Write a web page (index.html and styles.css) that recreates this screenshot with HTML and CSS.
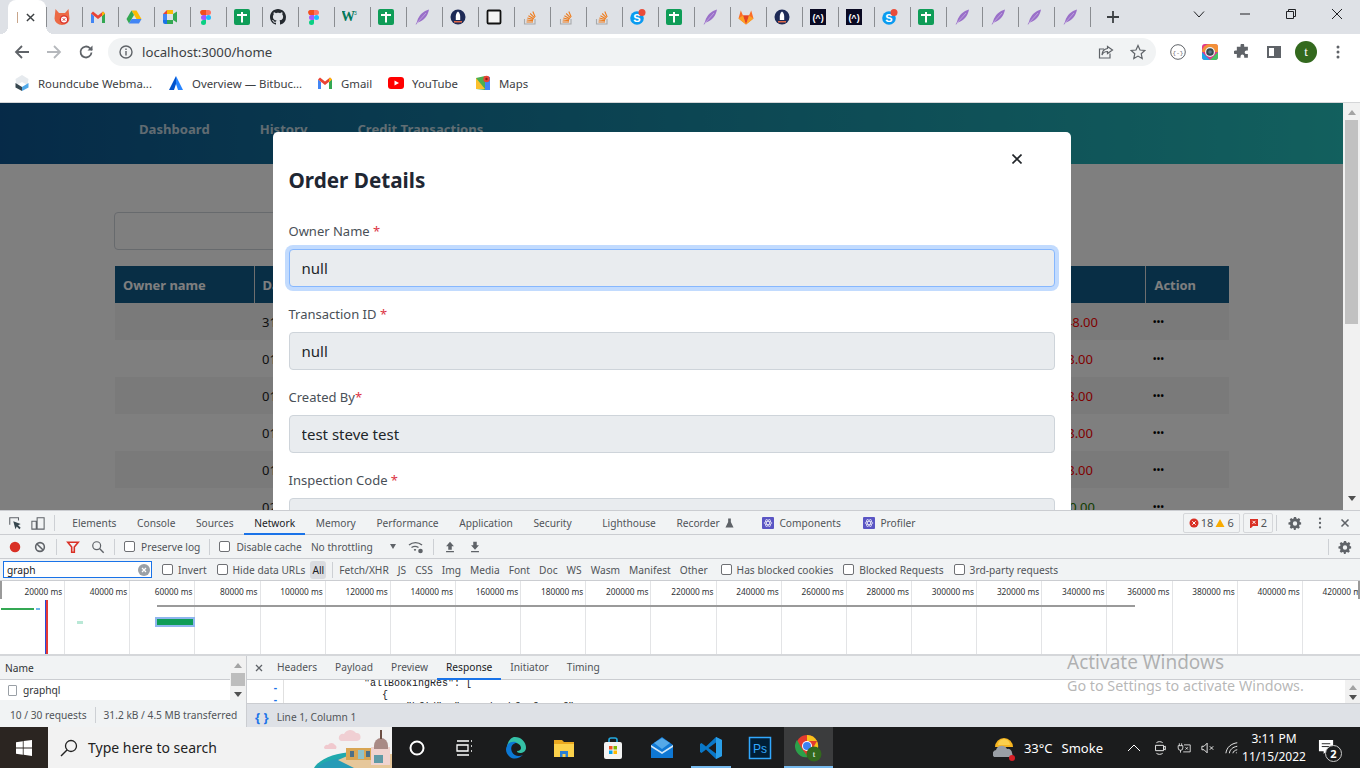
FILE: index.html
```html
<!DOCTYPE html>
<html lang="en">
<head>
  <meta charset="UTF-8">
  <title>localhost:3000/home</title>
  <link rel="stylesheet" href="styles.css">
</head>
<body>
<svg class="sprites" xmlns="http://www.w3.org/2000/svg">
  <symbol id="fox" viewBox="0 0 16 16"><path d="M1.500 0l3.500 4h6l3.500-4 1 9.500a7.500 6.500 0 0 1-15 0z" fill="#ec6a45"/><circle cx="10" cy="10.500" r="4.300" fill="#d9302c"/><circle cx="10" cy="10.500" r="3" fill="#fff"/><path d="M8.800 9.300l2.400 2.400m0-2.400l-2.400 2.400" stroke="#d9302c" stroke-width="1"/></symbol>
  <symbol id="gmail" viewBox="0 0 16 16"><path d="M1 4.500V14h3V7z" fill="#4285f4"/><path d="M12 7v7h3V4.500z" fill="#34a853"/><path d="M1 4.500L3 2.500l5 4 5-4 2 2-7 5.500z" fill="#ea4335"/><path d="M12 4l1-1.500L15 4.500 12 7z" fill="#fbbc04"/></symbol>
  <symbol id="drive" viewBox="0 0 16 16"><path d="M5.500 1.500h5l5 8.500h-5z" fill="#fbbc04"/><path d="M5.500 1.500L.5 10 3 14.500 8 6z" fill="#34a853"/><path d="M3 14.500h10l2.500-4.500h-10z" fill="#4285f4"/></symbol>
  <symbol id="meet" viewBox="0 0 16 16"><path d="M1 5l4-4h6v4H5v6H1z" fill="#ea4335"/><path d="M5 1h6v4H5z" fill="#fbbc04"/><path d="M1 11h4v4H3a2 2 0 0 1-2-2z" fill="#1a73e8"/><path d="M5 11h6v4H5z" fill="#34a853"/><path d="M11 5l4-2.500v11L11 11z" fill="#34a853"/><path d="M1 5h4v6H1z" fill="#4285f4"/></symbol>
  <symbol id="figma" viewBox="0 0 16 16"><path d="M4 1h4v5H5.500A2.500 2.500 0 0 1 4 1z" fill="#f24e1e"/><path d="M8 1h2.500a2.500 2.500 0 0 1 0 5H8z" fill="#ff7262"/><path d="M5.500 6H8v5H5.500a2.500 2.500 0 0 1 0-5z" fill="#a259ff"/><circle cx="10.500" cy="8.500" r="2.500" fill="#1abcfe"/><path d="M5.500 11H8v2.500A2.500 2.500 0 1 1 5.500 11z" fill="#0acf83"/></symbol>
  <symbol id="cross" viewBox="0 0 16 16"><rect width="16" height="16" rx="2" fill="#0f9d58"/><path d="M7 3h2v2h4v2H9v6.500H7V7H3V5h4z" fill="#fff"/></symbol>
  <symbol id="github" viewBox="0 0 16 16"><path fill="#24292f" d="M8 0C3.580 0 0 3.580 0 8c0 3.540 2.290 6.530 5.470 7.590.4.07.55-.17.55-.38 0-.19-.01-.82-.01-1.490-2.010.37-2.530-.49-2.690-.94-.09-.23-.48-.94-.82-1.130-.28-.15-.68-.52-.01-.53.63-.01 1.080.58 1.230.82.72 1.210 1.870.87 2.330.66.07-.52.28-.87.51-1.070-1.780-.2-3.640-.89-3.640-3.950 0-.87.31-1.590.82-2.150-.08-.2-.36-1.020.08-2.120 0 0 .67-.21 2.200.82.64-.18 1.320-.27 2-.27.68 0 1.360.09 2 .27 1.530-1.040 2.200-.82 2.200-.82.44 1.100.16 1.920.08 2.120.51.56.82 1.270.82 2.150 0 3.070-1.870 3.750-3.650 3.950.29.25.54.73.54 1.480 0 1.070-.01 1.930-.01 2.200 0 .21.15.46.55.38A8.013 8.013 0 0 0 16 8c0-4.420-3.580-8-8-8z"/></symbol>
  <symbol id="w3" viewBox="0 0 16 16"><text x="-1" y="12" font-family="Liberation Serif, serif" font-size="14" font-weight="700" fill="#04795b">W</text><text x="12" y="6" font-family="Liberation Sans, sans-serif" font-size="5" fill="#04795b">3</text></symbol>
  <symbol id="feather" viewBox="0 0 16 16"><path d="M15 .5C9.500 2 5 6 3.200 12c-.4 1.500-1 2.500-1.700 3.300l.7.3c.6-1 1.200-1.800 2.300-2.400C9.500 12 14 7 15 .5z" fill="#9a70c9"/><path d="M12 4L3 14" stroke="#d4c0ea" stroke-width=".6"/></symbol>
  <symbol id="astro" viewBox="0 0 16 16"><circle cx="8" cy="8" r="7.500" fill="#1d2a56"/><path d="M8 2.500c1.500 1.300 2.200 3 2.200 5v3.500H5.800V7.500c0-2 .7-3.700 2.200-5z" fill="#fff"/><rect x="4" y="12" width="8" height="1.500" fill="#e06a4a"/></symbol>
  <symbol id="square" viewBox="0 0 16 16"><rect x="1.500" y="1.500" width="13" height="13" rx="1" fill="#f4f4f4" stroke="#111" stroke-width="1.800"/></symbol>
  <symbol id="so" viewBox="0 0 16 16"><path d="M2.500 10v5h10.500v-5" fill="none" stroke="#a8aaac" stroke-width="1.100"/><path d="M4.500 13h6.500M4.700 11l6.300.6M5.300 9l6 1.500M6.400 6.800l5.400 2.900M8.200 4.500l4.400 4.300M10.800 2.500l2.400 5.500" stroke="#ee7d1f" stroke-width="1.100"/></symbol>
  <symbol id="skype" viewBox="0 0 16 16"><circle cx="7" cy="9" r="6.800" fill="#0a9bf0"/><text x="7" y="13" text-anchor="middle" font-family="Liberation Sans, sans-serif" font-size="11" font-weight="700" fill="#fff">S</text><circle cx="12" cy="3.500" r="3.500" fill="#ea4c3a"/></symbol>
  <symbol id="gitlab" viewBox="0 0 16 16"><path d="M8 15.500L.5 9.500 2.800 1.500 5 6.500h6l2.200-5 2.300 8z" fill="#fc6d26"/><path d="M8 15.500L5 6.500h6z" fill="#e24329"/><path d="M.5 9.500L5 6.500 8 15.500zM15.500 9.500L11 6.500 8 15.500z" fill="#fca326"/></symbol>
  <symbol id="fcc" viewBox="0 0 16 16"><rect width="16" height="16" fill="#0a0a23"/><text x="8" y="11.500" text-anchor="middle" font-family="Liberation Sans, sans-serif" font-size="9" font-weight="700" fill="#fff">(^)</text></symbol>
  <symbol id="gear" viewBox="0 0 16 16"><path fill="#5f6368" d="M6.800 1h2.400l.4 1.900 1.200.5 1.600-1 1.700 1.700-1 1.600.5 1.200L15 7.300v2.400l-1.900.4-.5 1.200 1 1.600-1.700 1.700-1.600-1-1.200.5-.4 1.900H6.800l-.4-1.900-1.200-.5-1.600 1-1.700-1.700 1-1.600-.5-1.200L.5 9.700V7.300l1.900-.4.500-1.200-1-1.600 1.700-1.700 1.600 1 1.200-.5zM8 6a2.500 2.500 0 1 0 0 5 2.500 2.500 0 0 0 0-5z"/></symbol>
  <symbol id="react" viewBox="0 0 12 12"><rect width="12" height="12" rx="1" fill="#5a55c4"/><g fill="none" stroke="#fff" stroke-width=".6"><ellipse cx="6" cy="6" rx="4" ry="1.600"/><ellipse cx="6" cy="6" rx="4" ry="1.600" transform="rotate(60 6 6)"/><ellipse cx="6" cy="6" rx="4" ry="1.600" transform="rotate(120 6 6)"/></g></symbol>
</svg>

<div class="browser">
  <div class="tabstrip">
    <div class="tab-active"><i class="tab-spinner"></i><svg class="tab-x" viewBox="0 0 10 10"><path d="M1 1l8 8m0-8l-8 8"/></svg></div>
    <div class="favs">
      <span class="fav"><svg><use href="#fox"/></svg></span>
      <span class="fav"><svg><use href="#gmail"/></svg></span>
      <span class="fav"><svg><use href="#drive"/></svg></span>
      <span class="fav"><svg><use href="#meet"/></svg></span>
      <span class="fav"><svg><use href="#figma"/></svg></span>
      <span class="fav"><svg><use href="#cross"/></svg></span>
      <span class="fav"><svg><use href="#github"/></svg></span>
      <span class="fav"><svg><use href="#figma"/></svg></span>
      <span class="fav"><svg><use href="#w3"/></svg></span>
      <span class="fav"><svg><use href="#cross"/></svg></span>
      <span class="fav"><svg><use href="#feather"/></svg></span>
      <span class="fav"><svg><use href="#astro"/></svg></span>
      <span class="fav"><svg><use href="#square"/></svg></span>
      <span class="fav"><svg><use href="#so"/></svg></span>
      <span class="fav"><svg><use href="#so"/></svg></span>
      <span class="fav"><svg><use href="#so"/></svg></span>
      <span class="fav"><svg><use href="#skype"/></svg></span>
      <span class="fav"><svg><use href="#cross"/></svg></span>
      <span class="fav"><svg><use href="#feather"/></svg></span>
      <span class="fav"><svg><use href="#gitlab"/></svg></span>
      <span class="fav"><svg><use href="#astro"/></svg></span>
      <span class="fav"><svg><use href="#fcc"/></svg></span>
      <span class="fav"><svg><use href="#fcc"/></svg></span>
      <span class="fav"><svg><use href="#skype"/></svg></span>
      <span class="fav"><svg><use href="#cross"/></svg></span>
      <span class="fav"><svg><use href="#feather"/></svg></span>
      <span class="fav"><svg><use href="#feather"/></svg></span>
      <span class="fav"><svg><use href="#feather"/></svg></span>
      <span class="fav"><svg><use href="#feather"/></svg></span>
      <span class="fav fav-end"><svg class="tab-plus" viewBox="0 0 12 12"><path d="M6 0v12M0 6h12"/></svg></span>
    </div>
    <div class="win-controls">
      <svg viewBox="0 0 12 12"><path d="M1 3.500l5 5.500 5-5.500"/></svg>
      <svg viewBox="0 0 12 12"><path d="M1 6h10"/></svg>
      <svg viewBox="0 0 12 12"><path d="M1.500 3.500h7v7h-7zM3.500 3.500v-2h7v7h-2"/></svg>
      <svg viewBox="0 0 12 12"><path d="M1 1l10 10m0-10L1 11"/></svg>
    </div>
  </div>

  <div class="toolbar">
    <svg class="nav-ic" viewBox="0 0 16 16"><path d="M15 8H2M8 2L2 8l6 6"/></svg>
    <svg class="nav-ic nav-off" viewBox="0 0 16 16"><path d="M1 8h13M8 2l6 6-6 6"/></svg>
    <svg class="nav-ic" viewBox="0 0 16 16"><path d="M13.500 8.500a5.500 5.500 0 1 1-1.600-4.400L14 6"/><path class="solid" d="M14.500 1.500v5h-5z"/></svg>
    <div class="omnibox">
      <svg class="omni-info" viewBox="0 0 14 14"><circle cx="7" cy="7" r="6"/><path d="M7 6v4.500M7 3.500v1.500"/></svg>
      <span class="url">localhost:3000/home</span>
      <svg class="omni-ic" viewBox="0 0 16 16"><path d="M12 9.500V14H1.500V5H6M9.500 2.500l5 3.500-5 3.500V7.500C7 7.500 5 8.500 4 11c0-4 2.500-6 5.500-6.500z"/></svg>
      <svg class="omni-ic" viewBox="0 0 16 16"><path d="M8 1.500l2 4.500 4.800.5-3.600 3.200 1 4.800L8 12.100l-4.200 2.400 1-4.800L1.200 6.500 6 6z"/></svg>
    </div>
    <div class="ext-icons">
      <svg viewBox="0 0 16 16"><circle cx="8" cy="8" r="7.300" fill="#fff" stroke="#5f6368"/><text x="8" y="10.500" text-anchor="middle" font-family="Liberation Mono, monospace" font-size="6" fill="#5f6368">{-}</text></svg>
      <svg viewBox="0 0 16 16"><rect width="16" height="16" rx="3" fill="#e0358c"/><path d="M0 8a8 8 0 0 1 8-8h5a3 3 0 0 1 3 3v5z" fill="#f7a823" opacity=".8"/><path d="M0 8v5a3 3 0 0 0 3 3h5z" fill="#1fa5e8"/><path d="M16 8v5a3 3 0 0 1-3 3H8z" fill="#43c463"/><circle cx="8" cy="8" r="5" fill="#eee"/><circle cx="8" cy="8" r="3.800" fill="#37474f"/><circle cx="8" cy="8" r="1.800" fill="#5d7d8c"/></svg>
      <svg viewBox="0 0 16 16"><path fill="#5f6368" d="M6 1.500a2 2 0 0 1 4 0V3h4v4h-1.500a2 2 0 0 0 0 4H14v4H10v-1.500a2 2 0 0 0-4 0V15H2v-4H.5a2 2 0 0 1 0-4H2V3h4z" transform="translate(1 0) scale(.92)"/></svg>
      <svg viewBox="0 0 16 16"><path fill="#5f6368" d="M1 2h14v12H1zm2 2v8h5V4z"/></svg>
      <span class="avatar">t</span>
      <svg viewBox="0 0 16 16"><circle cx="8" cy="3" r="1.500" fill="#5f6368"/><circle cx="8" cy="8" r="1.500" fill="#5f6368"/><circle cx="8" cy="13" r="1.500" fill="#5f6368"/></svg>
    </div>
  </div>

  <div class="bookmarks">
    <span class="bm bm-cube"><svg viewBox="0 0 16 16"><path d="M8 0l6.500 4-1 6L8 7 2.500 10l-1-6z" fill="#e6eaee"/><path d="M1.500 8L8 12v4l-6.500-3.500z" fill="#37474f"/><path d="M14.500 8L8 12v4l6.500-3.500z" fill="#4fa8e8"/></svg>Roundcube Webma...</span>
    <span class="bm bm-bit"><svg viewBox="0 0 16 16"><path d="M8 1L1 15h5l2-6z" fill="#0052cc"/><path d="M8 1l7 14h-5L8 9z" fill="#2684ff"/></svg>Overview — Bitbuc...</span>
    <span class="bm bm-gmail"><svg><use href="#gmail"/></svg>Gmail</span>
    <span class="bm bm-yt"><svg viewBox="0 0 16 16"><rect y="2" width="16" height="12" rx="3" fill="#f00"/><path d="M6.500 5.500L11 8l-4.500 2.500z" fill="#fff"/></svg>YouTube</span>
    <span class="bm"><svg viewBox="0 0 16 16"><path d="M1 3l9-2v14l-9-1z" fill="#4caf50"/><path d="M1 3l9 11H1z" fill="#fbc02d"/><path d="M10 1l5 1v13l-5 0z" fill="#4285f4"/><circle cx="11.500" cy="4" r="3.200" fill="#ea4335"/><circle cx="11.500" cy="4" r="1.200" fill="#8c1c13"/></svg>Maps</span>
  </div>

  <div class="viewport">
    <div class="page">
      <header class="app-header">
        <span>Dashboard</span>
        <span>History</span>
        <span>Credit Transactions</span>
      </header>
      <div class="search-box"></div>
      <table class="orders">
        <thead>
          <tr><th class="col-owner">Owner name</th><th class="col-date">Date</th><th class="col-status">Status</th><th class="col-amount">Amount</th><th class="col-action">Action</th></tr>
        </thead>
        <tbody>
          <tr><td></td><td>31/10/2022</td><td></td><td class="debit debit-long">148.00</td><td class="dots">•••</td></tr>
          <tr><td></td><td>01/11/2022</td><td></td><td class="debit">48.00</td><td class="dots">•••</td></tr>
          <tr><td></td><td>01/11/2022</td><td></td><td class="debit">48.00</td><td class="dots">•••</td></tr>
          <tr><td></td><td>01/11/2022</td><td></td><td class="debit">48.00</td><td class="dots">•••</td></tr>
          <tr><td></td><td>01/11/2022</td><td></td><td class="debit">48.00</td><td class="dots">•••</td></tr>
          <tr><td></td><td>02/11/2022</td><td></td><td class="credit">50.00</td><td class="dots">•••</td></tr>
        </tbody>
      </table>

      <div class="backdrop">
        <div class="modal">
          <div class="modal-close"><svg viewBox="0 0 10 10"><path d="M.5.5l9 9m0-9l-9 9"/></svg></div>
          <h2 class="modal-title">Order Details</h2>
          <div class="field">
            <label>Owner Name <em>*</em></label>
            <input class="focused" type="text" value="null" readonly>
          </div>
          <div class="field">
            <label>Transaction ID <em>*</em></label>
            <input type="text" value="null" readonly>
          </div>
          <div class="field">
            <label>Created By<em>*</em></label>
            <input type="text" value="test steve test" readonly>
          </div>
          <div class="field">
            <label>Inspection Code <em>*</em></label>
            <input type="text" readonly>
          </div>
        </div>
      </div>
    </div>
    <div class="page-scroll">
      <i class="arrow-up"></i>
      <div class="page-thumb"></div>
      <i class="arrow-down"></i>
    </div>
  </div>

  <div class="devtools">
    <div class="dt-tabs">
      <svg class="dt-ic" viewBox="0 0 16 16"><path d="M2 10V2h10v3" fill="none" stroke="#5f6368" stroke-width="1.200"/><path d="M6 6l2.500 9 1.500-3 3 3 1.500-1.500-3-3 3-1.500z" fill="#37474f"/></svg>
      <svg class="dt-ic" viewBox="0 0 16 16"><path d="M7 2h8v13H7zM1 6h5v9H1z" fill="none" stroke="#5f6368" stroke-width="1.200"/></svg>
      <i class="dt-sep"></i>
      <span class="dt-tab">Elements</span>
      <span class="dt-tab">Console</span>
      <span class="dt-tab">Sources</span>
      <span class="dt-tab dt-current">Network</span>
      <span class="dt-tab">Memory</span>
      <span class="dt-tab">Performance</span>
      <span class="dt-tab">Application</span>
      <span class="dt-tab">Security</span>
      <span class="dt-tab dt-light">Lighthouse</span>
      <span class="dt-tab dt-rec">Recorder <svg viewBox="0 0 10 10"><path d="M3.500 0h3v4l3 6H.5l3-6z" fill="#5f6368"/></svg></span>
      <span class="dt-tab dt-comp"><svg><use href="#react"/></svg>Components</span>
      <span class="dt-tab dt-prof"><svg><use href="#react"/></svg>Profiler</span>
      <div class="dt-right">
        <span class="badge"><svg viewBox="0 0 10 10"><circle cx="5" cy="5" r="4.500" fill="#d93025"/><path d="M3.300 3.300l3.400 3.400m0-3.400L3.300 6.700" stroke="#fff"/></svg>18 <svg viewBox="0 0 10 10"><path d="M5 1l4.500 8h-9z" fill="#f9ab00"/></svg>6</span>
        <span class="badge"><svg viewBox="0 0 10 10"><path d="M1 1h8v7H4l-2 2H1z" fill="#d93025"/><path d="M3.500 2.800l3 3m0-3l-3 3" stroke="#fff"/></svg>2</span>
        <i class="dt-sep"></i>
        <svg class="dt-ic"><use href="#gear"/></svg>
        <svg class="dt-ic" viewBox="0 0 16 16"><circle cx="8" cy="3" r="1.300" fill="#5f6368"/><circle cx="8" cy="8" r="1.300" fill="#5f6368"/><circle cx="8" cy="13" r="1.300" fill="#5f6368"/></svg>
        <svg class="dt-ic" viewBox="0 0 16 16"><path d="M4 4l8 8m0-8l-8 8" stroke="#5f6368" stroke-width="1.800"/></svg>
      </div>
    </div>

    <div class="dt-bar">
      <svg class="dt-ic" viewBox="0 0 16 16"><circle cx="8" cy="8" r="6" fill="#d93025"/></svg>
      <svg class="dt-ic" viewBox="0 0 16 16"><circle cx="8" cy="8" r="5" fill="none" stroke="#5f6368" stroke-width="1.800"/><path d="M4.500 4.500l7 7" stroke="#5f6368" stroke-width="1.800"/></svg>
      <i class="dt-sep"></i>
      <svg class="dt-ic" viewBox="0 0 16 16"><path d="M2 2.500h12L9.500 8v6h-3V8z" fill="none" stroke="#d93025" stroke-width="1.800"/></svg>
      <svg class="dt-ic" viewBox="0 0 16 16"><circle cx="6.500" cy="6.500" r="4.500" fill="none" stroke="#5f6368" stroke-width="1.400"/><path d="M10 10l4.500 4.500" stroke="#5f6368" stroke-width="1.600"/></svg>
      <i class="dt-sep"></i>
      <label class="check"><i class="box"></i>Preserve log</label>
      <i class="dt-sep"></i>
      <label class="check"><i class="box"></i>Disable cache</label>
      <span class="throttle">No throttling</span>
      <i class="caret"></i>
      <svg class="dt-ic wifi" viewBox="0 0 16 16"><path d="M1 6a10 10 0 0 1 13 0M3.500 8.500a6.500 6.500 0 0 1 7 0M6 11a3 3 0 0 1 2 0" fill="none" stroke="#5f6368" stroke-width="1.400"/><circle cx="12.500" cy="12" r="2.300" fill="#5f6368"/></svg>
      <i class="dt-sep"></i>
      <svg class="dt-ic" viewBox="0 0 16 16"><path d="M8 2l4.500 5H10v4H6V7H3.500zM3.500 12.500h9V14h-9z" fill="#5f6368"/></svg>
      <svg class="dt-ic" viewBox="0 0 16 16"><path d="M8 11L3.500 6H6V2h4v4h2.500zM3.500 12.500h9V14h-9z" fill="#5f6368"/></svg>
      <div class="dt-bar-end"><i class="dt-sep"></i><svg class="dt-ic"><use href="#gear"/></svg></div>
    </div>

    <div class="dt-filter">
      <div class="filter-input"><span>graph</span><svg viewBox="0 0 12 12"><circle cx="6" cy="6" r="6" fill="#9aa0a6"/><path d="M4 4l4 4m0-4L4 8" stroke="#fff" stroke-width="1.200"/></svg></div>
      <label class="check"><i class="box"></i>Invert</label>
      <label class="check"><i class="box"></i>Hide data URLs</label>
      <span class="type-all">All</span>
      <i class="dt-sep"></i>
      <div class="types">
        <span>Fetch/XHR</span><span>JS</span><span>CSS</span><span>Img</span><span>Media</span><span>Font</span><span>Doc</span><span>WS</span><span>Wasm</span><span>Manifest</span><span>Other</span>
      </div>
      <label class="check"><i class="box"></i>Has blocked cookies</label>
      <label class="check"><i class="box"></i>Blocked Requests</label>
      <label class="check"><i class="box"></i>3rd-party requests</label>
    </div>

    <div class="timeline">
      <div class="tick">20000 ms</div><div class="tick">40000 ms</div><div class="tick">60000 ms</div><div class="tick">80000 ms</div><div class="tick">100000 ms</div><div class="tick">120000 ms</div><div class="tick">140000 ms</div>
      <div class="tick">160000 ms</div><div class="tick">180000 ms</div><div class="tick">200000 ms</div><div class="tick">220000 ms</div><div class="tick">240000 ms</div><div class="tick">260000 ms</div><div class="tick">280000 ms</div>
      <div class="tick">300000 ms</div><div class="tick">320000 ms</div><div class="tick">340000 ms</div><div class="tick">360000 ms</div><div class="tick">380000 ms</div><div class="tick">400000 ms</div><div class="tick">420000 ms</div>
      <i class="ov ov-handle-l"></i><i class="ov ov-handle-r"></i><i class="ov ov-gray"></i><i class="ov ov-green"></i><i class="ov ov-blue"></i><i class="ov ov-dcl"></i><i class="ov ov-load"></i><i class="ov ov-req"></i><i class="ov ov-faint"></i>
    </div>

    <div class="net-split">
      <div class="net-list">
        <div class="net-rows">
          <div class="net-names">
            <div class="net-head">Name</div>
            <div class="net-row"><i class="doc-ic"></i>graphql</div>
          </div>
          <div class="net-scroll"><i class="arrow-up"></i><div class="net-thumb"></div><i class="arrow-down"></i></div>
        </div>
        <div class="net-status"><span>10 / 30 requests</span><i class="dt-sep"></i><span>31.2 kB / 4.5 MB transferred</span></div>
      </div>
      <div class="net-detail">
        <div class="detail-tabs">
          <svg class="detail-x" viewBox="0 0 10 10"><path d="M2 2l6 6m0-6L2 8"/></svg>
          <span>Headers</span><span>Payload</span><span>Preview</span><span class="detail-current">Response</span><span>Initiator</span><span>Timing</span>
        </div>
        <div class="code">
          <div class="code-gutter"><span>-</span><span>-</span></div>
          <pre class="code-lines">"allBookingRes": [
   {
       "bfid": "cc01ab8-bfe-fecs-f",</pre>
          <div class="code-scroll"><i class="arrow-up"></i><i class="arrow-down"></i></div>
        </div>
        <div class="detail-status"><span class="braces">{ }</span><span>Line 1, Column 1</span></div>
      </div>
    </div>
  </div>

  <div class="taskbar">
    <div class="start"><svg viewBox="0 0 16 16"><path fill="#fff" d="M0 2.200l6.800-1v6.400H0zM7.600 1.100L16 0v7.600H7.600zM0 8.400h6.800v6.400l-6.800-1zM7.600 8.400H16V16l-8.400-1.200z"/></svg></div>
    <div class="task-search">
      <svg class="mag" viewBox="0 0 18 18"><circle cx="11" cy="7" r="5.500" fill="none" stroke="#222" stroke-width="1.300"/><path d="M7 11l-6 6" stroke="#222" stroke-width="1.500"/></svg>
      <span>Type here to search</span>
      <svg class="search-art" viewBox="0 0 78 41">
        <path d="M25 12a4 4 0 0 1 5-5 7 7 0 0 1 12-1 4 4 0 0 1 1 8H27a3 3 0 0 1-2-2z" fill="#f0cfd3"/>
        <path d="M10 21a3 3 0 0 1 4-3 4 4 0 0 1 7 0 3 3 0 0 1 1 4H11z" fill="#f0c9ce"/>
        <path d="M0 41c6-10 22-15 38-16l8 16z" fill="#1fa9ad"/>
        <path d="M2 41c8-7 20-10 34-10l10 10z" fill="#2c8fc0" opacity=".55"/>
        <path d="M24 33l14-6h40v14H40z" fill="#e6c79a"/>
        <rect x="32" y="21" width="26" height="12" fill="#d8a552"/>
        <rect x="36" y="24" width="4" height="6" fill="#4c6f86"/>
        <rect x="44" y="23" width="6" height="9" fill="#8fc2c9"/>
        <rect x="52" y="24" width="4" height="6" fill="#4c6f86"/>
        <rect x="57" y="20" width="19" height="18" fill="#efd3cf"/>
        <rect x="60" y="28" width="9" height="8" fill="#5f9aa6"/>
        <path d="M60 19a7 8 0 0 1 14 0v3H60z" fill="#a98a85"/>
        <rect x="66" y="3" width="2" height="9" fill="#6d4f44"/>
      </svg>
    </div>
    <div class="task-icons">
      <span class="ti"><svg viewBox="0 0 20 20"><circle cx="10" cy="10" r="6.500" fill="none" stroke="#fff" stroke-width="2"/></svg></span>
      <span class="ti ti-view"><svg viewBox="0 0 20 20"><path d="M3 3h12M3 17h12M3 7h11v6H3zM17 3h1M17 8h1M17 13h1" fill="none" stroke="#fff" stroke-width="1.300"/></svg></span>
      <span class="ti"><svg viewBox="0 0 24 24"><path d="M12 1a11 11 0 0 1 11 11c0 3-3 5-6 5-2 0-3-1-3-2 3 0 4-2 4-3 0-3-3-5-6-5-5 0-8 4-8 8-1-5 2-14 8-14z" fill="#35c1a7"/><path d="M4 10c2-5 8-5 10-3-5 0-7 5-5 9s7 5 11 3c-3 3-9 5-13 2s-5-8-3-11z" fill="#0c78d4"/></svg></span>
      <span class="ti"><svg viewBox="0 0 24 24"><path d="M2 4h8l2 2h10v3H2z" fill="#e9a820"/><path d="M2 8h20v13H2z" fill="#fbd14b"/><path d="M8 15h8v6h-2.500v-3h-3v3H8z" fill="#2a7fd4"/></svg></span>
      <span class="ti"><svg viewBox="0 0 24 24"><path d="M8 7V4a2 2 0 0 1 2-2h4a2 2 0 0 1 2 2v3" fill="none" stroke="#23a9e0" stroke-width="1.600"/><rect x="3" y="6" width="18" height="17" rx="2" fill="#f3f3f3"/><rect x="8" y="10" width="3.500" height="3.500" fill="#f25022"/><rect x="12.500" y="10" width="3.500" height="3.500" fill="#7fba00"/><rect x="8" y="14.500" width="3.500" height="3.500" fill="#00a4ef"/><rect x="12.500" y="14.500" width="3.500" height="3.500" fill="#ffb900"/></svg></span>
      <span class="ti"><svg viewBox="0 0 24 24"><path d="M12 1l11 8v13H1V9z" fill="#0f78d4"/><path d="M1 9l11 7 11-7v2l-11 7-11-7z" fill="#cfe6f8"/><path d="M4 7l8-5 8 5-8 6z" fill="#55a9e8"/></svg></span>
      <span class="ti ti-open"><svg viewBox="0 0 24 24"><path d="M17 1l6 3v16l-6 3L7 13.500 2.500 17 1 16V8l1.500-1L7 10.500z" fill="#0a78c8"/><path d="M17 6.500v11L9.500 12z" fill="#1c1c1c"/><path d="M17 1l6 3v16l-6 3z" fill="#2a9fe8"/></svg></span>
      <span class="ti"><svg viewBox="0 0 24 24"><rect x="1.500" y="1.500" width="21" height="21" fill="#001e36" stroke="#31a8ff" stroke-width="1.500"/><text x="12" y="17" text-anchor="middle" font-family="Liberation Sans, sans-serif" font-size="12" fill="#31a8ff">Ps</text></svg></span>
      <span class="ti ti-active"><svg viewBox="0 0 28 28"><circle cx="12" cy="12" r="11" fill="#e33b2e"/><path d="M12 1a11 11 0 0 1 10 6H12z" fill="#f9c21a"/><path d="M22 7a11 11 0 0 1-9 16l5-9z" fill="#f9c21a"/><path d="M2 6l5 9 6 8a11 11 0 0 1-11-17z" fill="#2ca04a"/><circle cx="12" cy="12" r="5" fill="#fff"/><circle cx="12" cy="12" r="4" fill="#3e82f1"/><circle cx="19" cy="20" r="7.500" fill="#33691e"/><text x="19" y="23" text-anchor="middle" font-family="Liberation Serif, serif" font-size="9" fill="#fff">t</text></svg></span>
    </div>
    <div class="tray">
      <svg class="weather" viewBox="0 0 22 26"><path d="M2 12a9 9 0 0 1 18 0z" fill="#f6b420"/><path d="M5 10a6 6 0 0 1 12 0z" fill="#fcd04c"/><path d="M1 22a4 4 0 0 1 2-7 6 6 0 0 1 11-1 4 4 0 0 1 5 4 3 3 0 0 1-1 4z" fill="#9a9fa5"/><circle cx="19" cy="23" r="3" fill="#d71f26"/></svg>
      <span class="temp">33°C</span>
      <span class="smoke">Smoke</span>
      <svg class="tray-ic caret-up" viewBox="0 0 14 14"><path d="M1 10l6-6 6 6"/></svg>
      <svg class="tray-ic" viewBox="0 0 14 18"><path d="M2 6h9v6H2zM3 3c2-1.500 5-1.500 7 0M3 15c2 1.500 5 1.500 7 0M11 8l2-1v4l-2-1"/></svg>
      <svg class="tray-ic" viewBox="0 0 18 14"><path d="M3 1v3M6 1v3M1.500 4h6v3a3 3 0 0 1-6 0zM4.500 10v3M9 3h8v9H8M11 6l3 3m0-3l-3 3"/></svg>
      <svg class="tray-ic" viewBox="0 0 16 14"><path d="M1 5h2.500L7 1.500v11L3.500 9H1zM10 5l4 4m0-4l-4 4"/></svg>
      <svg class="tray-ic" viewBox="0 0 16 14"><path d="M1 13C2 6 7 2 14 1M5 13c.5-4 3.500-7 9-8M9 13c.5-2 2-3.500 5-4M13 12v1"/></svg>
      <div class="clock"><span>3:11 PM</span><span>11/15/2022</span></div>
      <div class="notif"><svg viewBox="0 0 18 18"><path fill="#fff" d="M1 1h15v12H9l-3 3v-3H1z"/><path d="M4 5h9M4 8h9" stroke="#222"/></svg><b>2</b></div>
    </div>
  </div>

  <div class="watermark">
    <p>Activate Windows</p>
    <p>Go to Settings to activate Windows.</p>
  </div>
</div>
</body>
</html>
```

FILE: styles.css
```css
* {
  box-sizing: border-box;
}
body {
  margin: 0;
  font-family: "Noto Sans", "Open Sans", sans-serif;
  overflow: hidden;
}
.sprites {
  display: none;
}
.browser {
  position: relative;
  width: 1360px;
  height: 768px;
  display: flex;
  flex-direction: column;
  overflow: hidden;
  background: #fff;
}

/* tab strip */
.tabstrip {
  height: 34px;
  flex: none;
  display: flex;
  background: #dee1e6;
  padding-left: 8px;
}
.tab-active {
  position: relative;
  width: 38px;
  background: #fff;
  border-radius: 8px 8px 0 0;
  display: flex;
  align-items: center;
  padding: 0 0 0 9px;
  gap: 8px;
}
.tab-active::before,
.tab-active::after {
  content: "";
  position: absolute;
  bottom: 0;
  width: 8px;
  height: 8px;
}
.tab-active::before {
  left: -8px;
  background: radial-gradient(circle at 0 0, transparent 8px, #fff 8px);
}
.tab-active::after {
  right: -8px;
  background: radial-gradient(circle at 100% 0, transparent 8px, #fff 8px);
}
.tab-spinner {
  width: 1px;
  height: 11px;
  background: #c8a58a;
}
.tab-x {
  width: 9px;
  height: 9px;
  fill: none;
  stroke: #3c4043;
  stroke-width: 1.6;
}
.favs {
  display: flex;
  margin-left: -2px;
}
.fav {
  width: 36px;
  height: 34px;
  display: flex;
  align-items: center;
  justify-content: center;
  background: linear-gradient(#8a8d91, #8a8d91) 2px 50% / 1px 20px no-repeat;
}
.fav svg {
  width: 16px;
  height: 16px;
}
.fav-end {
  width: 50px;
}
.fav .tab-plus {
  width: 12px;
  height: 12px;
  fill: none;
  stroke: #3c4043;
  stroke-width: 1.8;
}
.win-controls {
  margin-left: auto;
  display: flex;
  gap: 34px;
  padding: 8px 17px 0 0;
}
.win-controls svg {
  width: 12px;
  height: 12px;
  fill: none;
  stroke: #202124;
  stroke-width: 1;
}

/* address bar */
.toolbar {
  height: 32px;
  flex: none;
  display: flex;
  align-items: flex-start;
  padding: 4px 0 0 14px;
  background: #fff;
}
.nav-ic {
  width: 16px;
  height: 16px;
  margin: 6px 16px 0 0;
  fill: none;
  stroke: #5f6368;
  stroke-width: 1.8;
}
.nav-ic .solid {
  fill: #5f6368;
  stroke: none;
}
.nav-off {
  stroke: #b5b8bc;
}
.omnibox {
  width: 1048px;
  height: 28px;
  margin-left: -2px;
  border-radius: 14px;
  background: #f1f3f4;
  display: flex;
  align-items: center;
  padding: 0 10px 0 11px;
}
.omni-info {
  width: 14px;
  height: 14px;
  fill: none;
  stroke: #5f6368;
  stroke-width: 1.4;
}
.url {
  margin-left: 9px;
  font-size: 13.2px;
  color: #3c4043;
}
.omni-ic {
  width: 16px;
  height: 16px;
  fill: none;
  stroke: #5f6368;
  stroke-width: 1.2;
  margin-left: 16px;
}
.omni-ic:nth-of-type(2) {
  margin-left: auto;
}
.ext-icons {
  display: flex;
  align-items: center;
  gap: 16px;
  height: 28px;
  margin-left: 14px;
}
.ext-icons svg {
  width: 16px;
  height: 16px;
}
.avatar {
  width: 22px;
  height: 22px;
  margin: 0 -3px;
  border-radius: 50%;
  background: #33691e;
  color: #fff;
  font: 13px/22px "Liberation Serif", serif;
  text-align: center;
}

/* bookmarks */
.bookmarks {
  height: 37px;
  flex: none;
  display: flex;
  align-items: center;
  padding: 0 0 2px 14px;
  font-size: 11.4px;
  color: #3c4043;
  border-bottom: 1px solid #d5d6d8;
}
.bm {
  display: flex;
  align-items: center;
  gap: 8px;
}
.bm svg {
  width: 16px;
  height: 16px;
}
.bm-cube {
  width: 154px;
}
.bm-bit {
  width: 149px;
}
.bm-gmail {
  width: 71px;
}
.bm-yt {
  width: 87px;
}

/* page behind the modal */
.viewport {
  height: 407px;
  flex: none;
  display: flex;
  overflow: hidden;
}
.page {
  position: relative;
  flex: 1;
  overflow: hidden;
  background: #fff;
  font-family: "Noto Sans", sans-serif;
}
.app-header {
  height: 61px;
  background: linear-gradient(90deg, #0c5590, #25c0bc);
  padding: 16px 0 0 139px;
  display: flex;
  gap: 50px;
  font-size: 13.1px;
  font-weight: 700;
  color: rgba(255, 255, 255, .75);
  line-height: 20px;
}
.search-box {
  width: 400px;
  height: 38px;
  margin: 48px 0 16px 114px;
  border: 1px solid #ced4da;
  border-radius: 4px;
}
.orders {
  margin-left: 115px;
  width: 1114px;
  table-layout: fixed;
  border-collapse: collapse;
  font-size: 13px;
}
.orders th {
  height: 37px;
  padding: 0 8px;
  text-align: left;
  background: #105c8a;
  color: #fff;
  font-size: 12.9px;
  font-weight: 700;
  border-right: 1px solid #ddd;
}
.orders th:last-child {
  border-right: 0;
}
.col-owner {
  width: 139px;
}
.col-date {
  width: 200px;
}
.col-status {
  width: 400px;
}
.orders .col-action {
  width: 84px;
  padding-left: 9px;
}
.orders td {
  height: 37px;
  padding: 0 8px;
  color: #222;
}
.orders tbody tr:nth-child(odd) td {
  background: #f5f5f5;
}
.orders .debit {
  color: #f00;
  text-align: right;
  padding-right: 52px;
}
.orders .debit-long {
  padding-right: 47px;
}
.orders .credit {
  color: #1f7a00;
  text-align: right;
  padding-right: 50px;
}
.orders .dots {
  font-size: 9px;
  font-weight: 700;
  color: #000;
  letter-spacing: .4px;
}

/* modal */
.backdrop {
  position: absolute;
  inset: 0;
  background: rgba(0, 0, 0, .5);
  display: flex;
  justify-content: center;
  align-items: flex-start;
  padding-top: 29px;
}
.modal {
  width: 798px;
  height: 500px;
  flex: none;
  padding: 0 16px;
  background: #fff;
  border-radius: 5px;
}
.modal-close {
  height: 36px;
  padding: 22px 33px 0 0;
  display: flex;
  justify-content: flex-end;
}
.modal-close svg {
  width: 10px;
  height: 10px;
  fill: none;
  stroke: #212529;
  stroke-width: 1.6;
}
.modal-title {
  margin: -6px 0 21px;
  font-size: 20.7px;
  line-height: 36px;
  font-weight: 700;
  color: #1f2733;
}
.field {
  margin-bottom: 15px;
}
.field label {
  display: block;
  height: 24px;
  margin-bottom: 6px;
  font-size: 13px;
  line-height: 24px;
  color: #495057;
}
.field em {
  font-style: normal;
  color: #dc3545;
}
.field input {
  display: block;
  width: 100%;
  height: 38px;
  padding: 0 12px;
  border: 1px solid #ced4da;
  border-radius: 4px;
  background: #e9ecef;
  font-family: "Noto Sans", sans-serif;
  font-size: 15px;
  color: #212529;
  outline: 0;
}
.field input.focused {
  border-color: #86b7fe;
  box-shadow: 0 0 0 4px #c2dbfe;
}
.page-scroll {
  width: 17px;
  flex: none;
  background: #f1f1f1;
  display: flex;
  flex-direction: column;
  align-items: center;
  padding-top: 7px;
}
.page-thumb {
  width: 13px;
  height: 204px;
  margin: 5px 0 172px;
  background: #c1c1c1;
}
.arrow-up,
.arrow-down {
  display: block;
  width: 0;
  height: 0;
  border-left: 4px solid transparent;
  border-right: 4px solid transparent;
}
.arrow-up {
  border-bottom: 5px solid #a3a3a3;
}
.arrow-down {
  border-top: 5px solid #505050;
}

/* devtools */
.devtools {
  height: 217px;
  flex: none;
  display: flex;
  flex-direction: column;
  background: #f1f3f4;
  border-top: 1px solid #cbcdd1;
  font-size: 10.2px;
  color: #505458;
}
.dt-ic {
  width: 14px;
  height: 14px;
  flex: none;
}
.dt-sep {
  display: block;
  width: 1px;
  height: 16px;
  flex: none;
  background: #cdd0d4;
}
.dt-tabs {
  height: 24px;
  flex: none;
  display: flex;
  align-items: center;
  padding-left: 8px;
  border-bottom: 1px solid #cbcdd1;
}
.dt-tabs > .dt-ic {
  margin-right: 9px;
}
.dt-tabs > .dt-sep {
  margin: 0 7px 0 0;
}
.dt-tab {
  height: 24px;
  padding: 0 10.3px;
  display: flex;
  align-items: center;
  gap: 5px;
  white-space: nowrap;
}
.dt-current {
  border-bottom: 2px solid #1a73e8;
  padding-top: 2px;
  color: #202124;
}
.dt-light {
  margin-left: 10px;
}
.dt-rec svg {
  width: 9px;
  height: 10px;
}
.dt-comp svg,
.dt-prof svg {
  width: 12px;
  height: 12px;
}
.dt-comp {
  margin-left: 8px;
}
.dt-prof {
  margin-left: 2px;
}
.dt-right {
  margin-left: auto;
  display: flex;
  align-items: center;
  gap: 3px;
  padding-right: 8px;
}
.dt-right .dt-ic {
  margin-left: 8px;
}
.badge {
  display: flex;
  align-items: center;
  gap: 2px;
  height: 20px;
  padding: 0 5px;
  border: 1px solid #d5d7da;
  border-radius: 2px;
  font-size: 11px;
}
.badge svg {
  width: 10px;
  height: 10px;
}
.dt-bar {
  height: 24px;
  flex: none;
  display: flex;
  align-items: center;
  gap: 9px;
  padding-left: 8px;
  border-bottom: 1px solid #cbcdd1;
}
.dt-bar .dt-ic {
  margin-right: 2px;
}
.dt-bar > .dt-sep {
  margin-left: -2px;
}
.dt-bar .check {
  margin-right: 2px;
}
.check {
  display: flex;
  align-items: center;
  gap: 6px;
  white-space: nowrap;
}
.box {
  display: block;
  width: 11px;
  height: 11px;
  background: #fff;
  border: 1px solid #6e7074;
  border-radius: 2px;
}
.throttle {
  margin-left: -2px;
  white-space: nowrap;
}
.caret {
  margin: 0 3px 0 8px;
  border-left: 3.5px solid transparent;
  border-right: 3.5px solid transparent;
  border-top: 5px solid #5f6368;
}
.wifi {
  width: 16px;
  height: 16px;
}
.dt-bar-end {
  margin-left: auto;
  display: flex;
  align-items: center;
  gap: 9px;
  padding-right: 6px;
}
.dt-filter {
  height: 22px;
  flex: none;
  display: flex;
  align-items: center;
  padding-left: 3px;
  gap: 10px;
  border-bottom: 1px solid #cbcdd1;
}
.dt-filter .check {
  gap: 5px;
}
.filter-input {
  width: 149px;
  height: 17px;
  flex: none;
  padding: 0 1px 0 3px;
  display: flex;
  align-items: center;
  justify-content: space-between;
  background: #fff;
  border: 1px solid #1a73e8;
  color: #202124;
}
.filter-input svg {
  width: 12px;
  height: 12px;
}
.type-all {
  margin-left: -5px;
  padding: 2px;
  background: #dadce0;
  border-radius: 3px;
  color: #202124;
}
.dt-filter .dt-sep {
  margin-left: -4px;
  margin-right: -4px;
}
.types {
  display: flex;
  gap: 9px;
  margin-right: 3px;
  white-space: nowrap;
}
.timeline {
  position: relative;
  height: 75px;
  flex: none;
  display: flex;
  background: #fff;
  overflow: hidden;
  border-bottom: 2px solid #d5d7da;
}
.tick {
  flex: 0 0 65.15px;
  padding: 5px 2px 0 0;
  text-align: right;
  font-size: 8.3px;
  color: #303336;
  border-right: 1px solid #e3e4e6;
  white-space: nowrap;
}
.ov {
  position: absolute;
  display: block;
}
.ov-handle-l {
  left: 0;
  top: 0;
  width: 2px;
  height: 18px;
  background: #9a9a9a;
}
.ov-handle-r {
  right: 0;
  top: 0;
  width: 2px;
  height: 18px;
  background: #9a9a9a;
}
.ov-gray {
  left: 157px;
  top: 24px;
  width: 978px;
  height: 2px;
  background: #9a9a9a;
}
.ov-green {
  left: 1px;
  top: 27px;
  width: 33px;
  height: 2px;
  background: #34a853;
}
.ov-blue {
  left: 155px;
  top: 36px;
  width: 40px;
  height: 10px;
  background: #0f9d58;
  border: 2px solid #8fb6ee;
}
.ov-dcl {
  left: 45px;
  top: 19px;
  width: 1px;
  height: 54px;
  background: #2a4bd7;
}
.ov-load {
  left: 46px;
  top: 19px;
  width: 2px;
  height: 54px;
  background: #e53935;
}
.ov-req {
  left: 36px;
  top: 27px;
  width: 4px;
  height: 2px;
  background: #6fb7ea;
}
.ov-faint {
  left: 77px;
  top: 40px;
  width: 6px;
  height: 3px;
  background: #b9e8d6;
}
.net-split {
  flex: 1;
  display: flex;
  min-height: 0;
}
.net-list {
  width: 247px;
  flex: none;
  display: flex;
  flex-direction: column;
  border-right: 1px solid #cbcdd1;
}
.net-rows {
  height: 44px;
  flex: none;
  display: flex;
}
.net-names {
  flex: 1;
}
.net-head {
  height: 24px;
  padding: 5px 0 0 5px;
  border-bottom: 1px solid #cbcdd1;
  color: #303336;
}
.net-row {
  height: 20px;
  background: #fff;
  display: flex;
  align-items: center;
  gap: 6px;
  padding-left: 8px;
  color: #303336;
}
.doc-ic {
  display: block;
  width: 9px;
  height: 11px;
  border: 1px solid #9aa0a6;
  background: #fff;
  border-radius: 1px;
}
.net-scroll {
  width: 16px;
  background: #f1f1f1;
  display: flex;
  flex-direction: column;
  align-items: center;
  padding-top: 7px;
}
.net-thumb {
  width: 14px;
  height: 13px;
  margin: 5px 0 6px;
  background: #bdbdbd;
}
.net-status {
  flex: 1;
  display: flex;
  align-items: center;
  gap: 8px;
  padding: 3px 0 0 10px;
  white-space: nowrap;
}
.net-detail {
  flex: 1;
  min-width: 0;
  display: flex;
  flex-direction: column;
}
.detail-tabs {
  height: 24px;
  flex: none;
  display: flex;
  align-items: center;
  padding-left: 7px;
  border-bottom: 1px solid #cbcdd1;
}
.detail-x {
  width: 10px;
  height: 10px;
  margin-right: 4px;
  fill: none;
  stroke: #5f6368;
  stroke-width: 1.3;
}
.detail-tabs span {
  height: 24px;
  padding: 0 9px;
  line-height: 22px;
}
.detail-tabs .detail-current {
  border-bottom: 2px solid #1a73e8;
  color: #202124;
}
.code {
  height: 24px;
  flex: none;
  display: flex;
  background: #fff;
  overflow: hidden;
  border-bottom: 1px solid #cbcdd1;
}
.code-gutter {
  width: 37px;
  flex: none;
  display: flex;
  flex-direction: column;
  align-items: flex-end;
  padding: 1px 6px 0 0;
  border-right: 1px solid #e0e0e0;
  line-height: 12px;
  color: #1a73e8;
  font-weight: 700;
}
.code-lines {
  flex: 1;
  margin: -2px 0 0 80px;
  font: 10px/12px "Liberation Mono", monospace;
  color: #202124;
}
.code-scroll {
  width: 15px;
  flex: none;
  background: #f1f1f1;
  display: flex;
  flex-direction: column;
  align-items: center;
  gap: 5px;
  padding-top: 5px;
}
.detail-status {
  flex: 1;
  display: flex;
  align-items: center;
  gap: 8px;
  padding: 2px 0 0 8px;
  background: #dee1e6;
}
.braces {
  color: #1a73e8;
  font-size: 13px;
  font-weight: 700;
}

/* windows taskbar */
.taskbar {
  height: 41px;
  flex: none;
  display: flex;
  background: #1b1c1d;
  color: #fff;
}
.start {
  width: 48px;
  flex: none;
  display: flex;
  align-items: center;
  justify-content: center;
  background: #2b2521;
}
.start svg {
  width: 16px;
  height: 16px;
}
.task-search {
  width: 344px;
  flex: none;
  display: flex;
  align-items: center;
  background: #f2f2f2;
  color: #222;
  font-size: 14px;
  padding-left: 12px;
  overflow: hidden;
}
.mag {
  width: 18px;
  height: 18px;
  flex: none;
}
.task-search span {
  margin-left: 10px;
}
.search-art {
  width: 78px;
  height: 41px;
  margin-left: auto;
  flex: none;
}
.task-icons {
  display: flex;
}
.ti {
  width: 49px;
  display: flex;
  align-items: center;
  justify-content: center;
}
.ti svg {
  width: 24px;
  height: 24px;
}
.ti:nth-child(1) svg,
.ti:nth-child(2) svg {
  width: 20px;
  height: 20px;
}
.ti-view {
  padding-right: 4px;
}
.ti-open {
  background: linear-gradient(#76b9ed, #76b9ed) 50% 100% / 40px 2px no-repeat;
}
.ti-active {
  background: #3b3c3d;
  box-shadow: inset 0 -2px 0 0 #76b9ed;
}
.ti-active svg {
  width: 28px;
  height: 28px;
}
.tray {
  margin-left: auto;
  display: flex;
  align-items: center;
  padding-right: 10px;
  font-size: 13px;
}
.weather {
  width: 22px;
  height: 26px;
  margin-right: 9px;
}
.smoke {
  margin-left: 9px;
}
.tray-ic {
  width: 14px;
  height: 16px;
  margin-left: 10px;
  fill: none;
  stroke: #fff;
  stroke-width: 1;
}
.caret-up {
  margin-left: 24px;
  margin-right: 2px;
}
.clock {
  width: 64px;
  margin-left: 3px;
  display: flex;
  flex-direction: column;
  align-items: center;
  font-size: 12px;
  line-height: 18px;
  white-space: nowrap;
}
.notif {
  position: relative;
  width: 32px;
  margin-left: 12px;
}
.notif svg {
  width: 17px;
  height: 17px;
  display: block;
}
.notif b {
  position: absolute;
  left: 7px;
  top: 6px;
  width: 17px;
  height: 17px;
  border: 1px solid #ccc;
  border-radius: 50%;
  background: #1b1c1d;
  font: 700 11px/15px "Noto Sans", sans-serif;
  text-align: center;
}

/* activation notice over devtools */
.watermark {
  position: absolute;
  left: 1067px;
  top: 650px;
  color: rgba(110, 110, 110, .5);
  white-space: nowrap;
  pointer-events: none;
}
.watermark p {
  margin: 0;
  font-size: 14.3px;
  line-height: 23px;
}
.watermark p:first-child {
  font-size: 19px;
  line-height: 24px;
}
```
